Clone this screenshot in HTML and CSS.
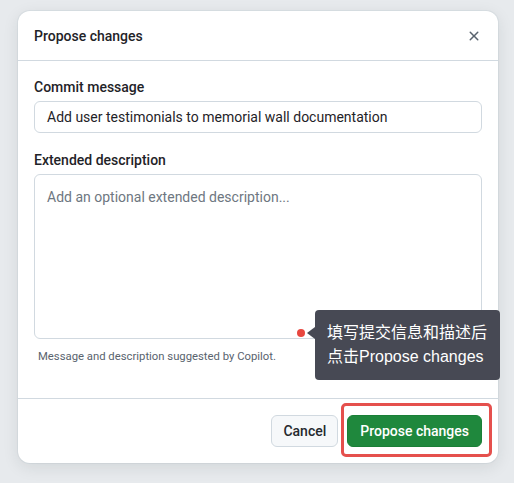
FILE: index.html
```html
<!DOCTYPE html>
<html lang="zh-CN">
<head>
<meta charset="utf-8">
<title>Propose changes</title>
<link rel="stylesheet" href="styles.css">
</head>
<body>
<div class="dialog">
  <div class="header">
    <h1 class="title">Propose changes</h1>
    <button class="close" aria-label="Close">
      <svg width="16" height="16" viewBox="0 0 16 16"><path d="M3.72 3.72a.75.75 0 0 1 1.06 0L8 6.94l3.22-3.22a.75.75 0 1 1 1.06 1.06L9.06 8l3.22 3.22a.75.75 0 1 1-1.06 1.06L8 9.06l-3.22 3.22a.75.75 0 0 1-1.06-1.06L6.94 8 3.72 4.78a.75.75 0 0 1 0-1.06Z" fill="#59636e"/></svg>
    </button>
  </div>
  <div class="body">
    <label class="label">Commit message</label>
    <div class="input">Add user testimonials to memorial wall documentation</div>
    <label class="label label-second">Extended description</label>
    <div class="textarea"><span class="placeholder">Add an optional extended description...</span></div>
    <p class="helper">Message and description suggested by Copilot.</p>
  </div>
  <div class="footer">
    <button class="btn btn-cancel">Cancel</button>
    <button class="btn btn-primary">Propose changes</button>
  </div>
  <div class="highlight"></div>
  <div class="dot"></div>
  <div class="tooltip">填写提交信息和描述后<br>点击Propose changes</div>
</div>
</body>
</html>
```
FILE: styles.css
```css
* { box-sizing: border-box; }
html, body { margin: 0; padding: 0; }
body {
  background: #e7eaed;
  width: 514px;
  height: 483px;
  overflow: hidden;
  font-family: Roboto, "Noto Sans CJK SC", sans-serif;
  color: #1f2328;
  padding: 11px 0 0 18px;
}
.dialog {
  position: relative;
  width: 480px;
  background: #ffffff;
  border-radius: 12px;
  box-shadow: 0 4px 16px rgba(31, 35, 40, 0.10), 0 0 0 1px rgba(209, 217, 224, 0.5);
}
.header {
  height: 50px;
  display: flex;
  align-items: center;
  justify-content: space-between;
  padding: 0 8px 0 16px;
  border-bottom: 1px solid #d1d9e0;
}
.title {
  margin: 0;
  font-size: 14px;
  font-weight: 500;
  line-height: 20px;
  padding-top: 1px;
}
.close {
  width: 32px;
  height: 32px;
  border: 0;
  background: transparent;
  display: flex;
  align-items: center;
  justify-content: center;
  padding: 0;
}
.body {
  padding: 16px 16px 31px;
  display: flex;
  flex-direction: column;
}
.label {
  font-size: 14px;
  font-weight: 500;
  line-height: 20px;
  margin-bottom: 4px;
}
.label-second { margin-top: 17px; }
.input {
  height: 32px;
  border: 1px solid #d1d9e0;
  border-radius: 6px;
  padding: 0 12px;
  font-size: 14px;
  line-height: 30px;
  white-space: nowrap;
}
.textarea {
  height: 165px;
  border: 1px solid #d1d9e0;
  border-radius: 6px;
  padding: 12px 12px;
  font-size: 14px;
  line-height: 20px;
}
.placeholder { color: #6e7781; }
.helper {
  margin: 8px 0 0 4px;
  font-size: 11.3px;
  line-height: 20px;
  color: #59636e;
}
.footer {
  border-top: 1px solid #d1d9e0;
  padding: 16px;
  display: flex;
  justify-content: flex-end;
  gap: 9px;
}
.btn {
  height: 32px;
  border-radius: 6px;
  font-family: inherit;
  font-size: 14px;
  font-weight: 500;
  line-height: 20px;
  padding: 0 12px;
}
.btn-cancel {
  background: #f6f8fa;
  border: 1px solid #d1d9e0;
  color: #25292e;
  padding: 0 11px;
}
.btn-primary {
  background: #1f883d;
  border: 1px solid #1a7f37;
  color: #ffffff;
}
.highlight {
  position: absolute;
  left: 323px;
  top: 392px;
  width: 151px;
  height: 54px;
  border: 3px solid #e5504d;
  border-radius: 5px;
}
.dot {
  position: absolute;
  left: 279px;
  top: 318px;
  width: 8px;
  height: 8px;
  border-radius: 50%;
  background: #e8473f;
}
.tooltip {
  position: absolute;
  left: 297px;
  top: 299px;
  width: 185px;
  height: 70px;
  background: #474954;
  color: #ffffff;
  border-radius: 4px;
  padding: 11px 0 0 12px;
  font-family: "Liberation Sans", "Noto Sans CJK SC", sans-serif;
  font-size: 16px;
  line-height: 24px;
  white-space: nowrap;
}
.tooltip::before {
  content: "";
  position: absolute;
  left: -8px;
  top: 17px;
  border-style: solid;
  border-width: 6px 8px 6px 0;
  border-color: transparent #474954 transparent transparent;
}
```
